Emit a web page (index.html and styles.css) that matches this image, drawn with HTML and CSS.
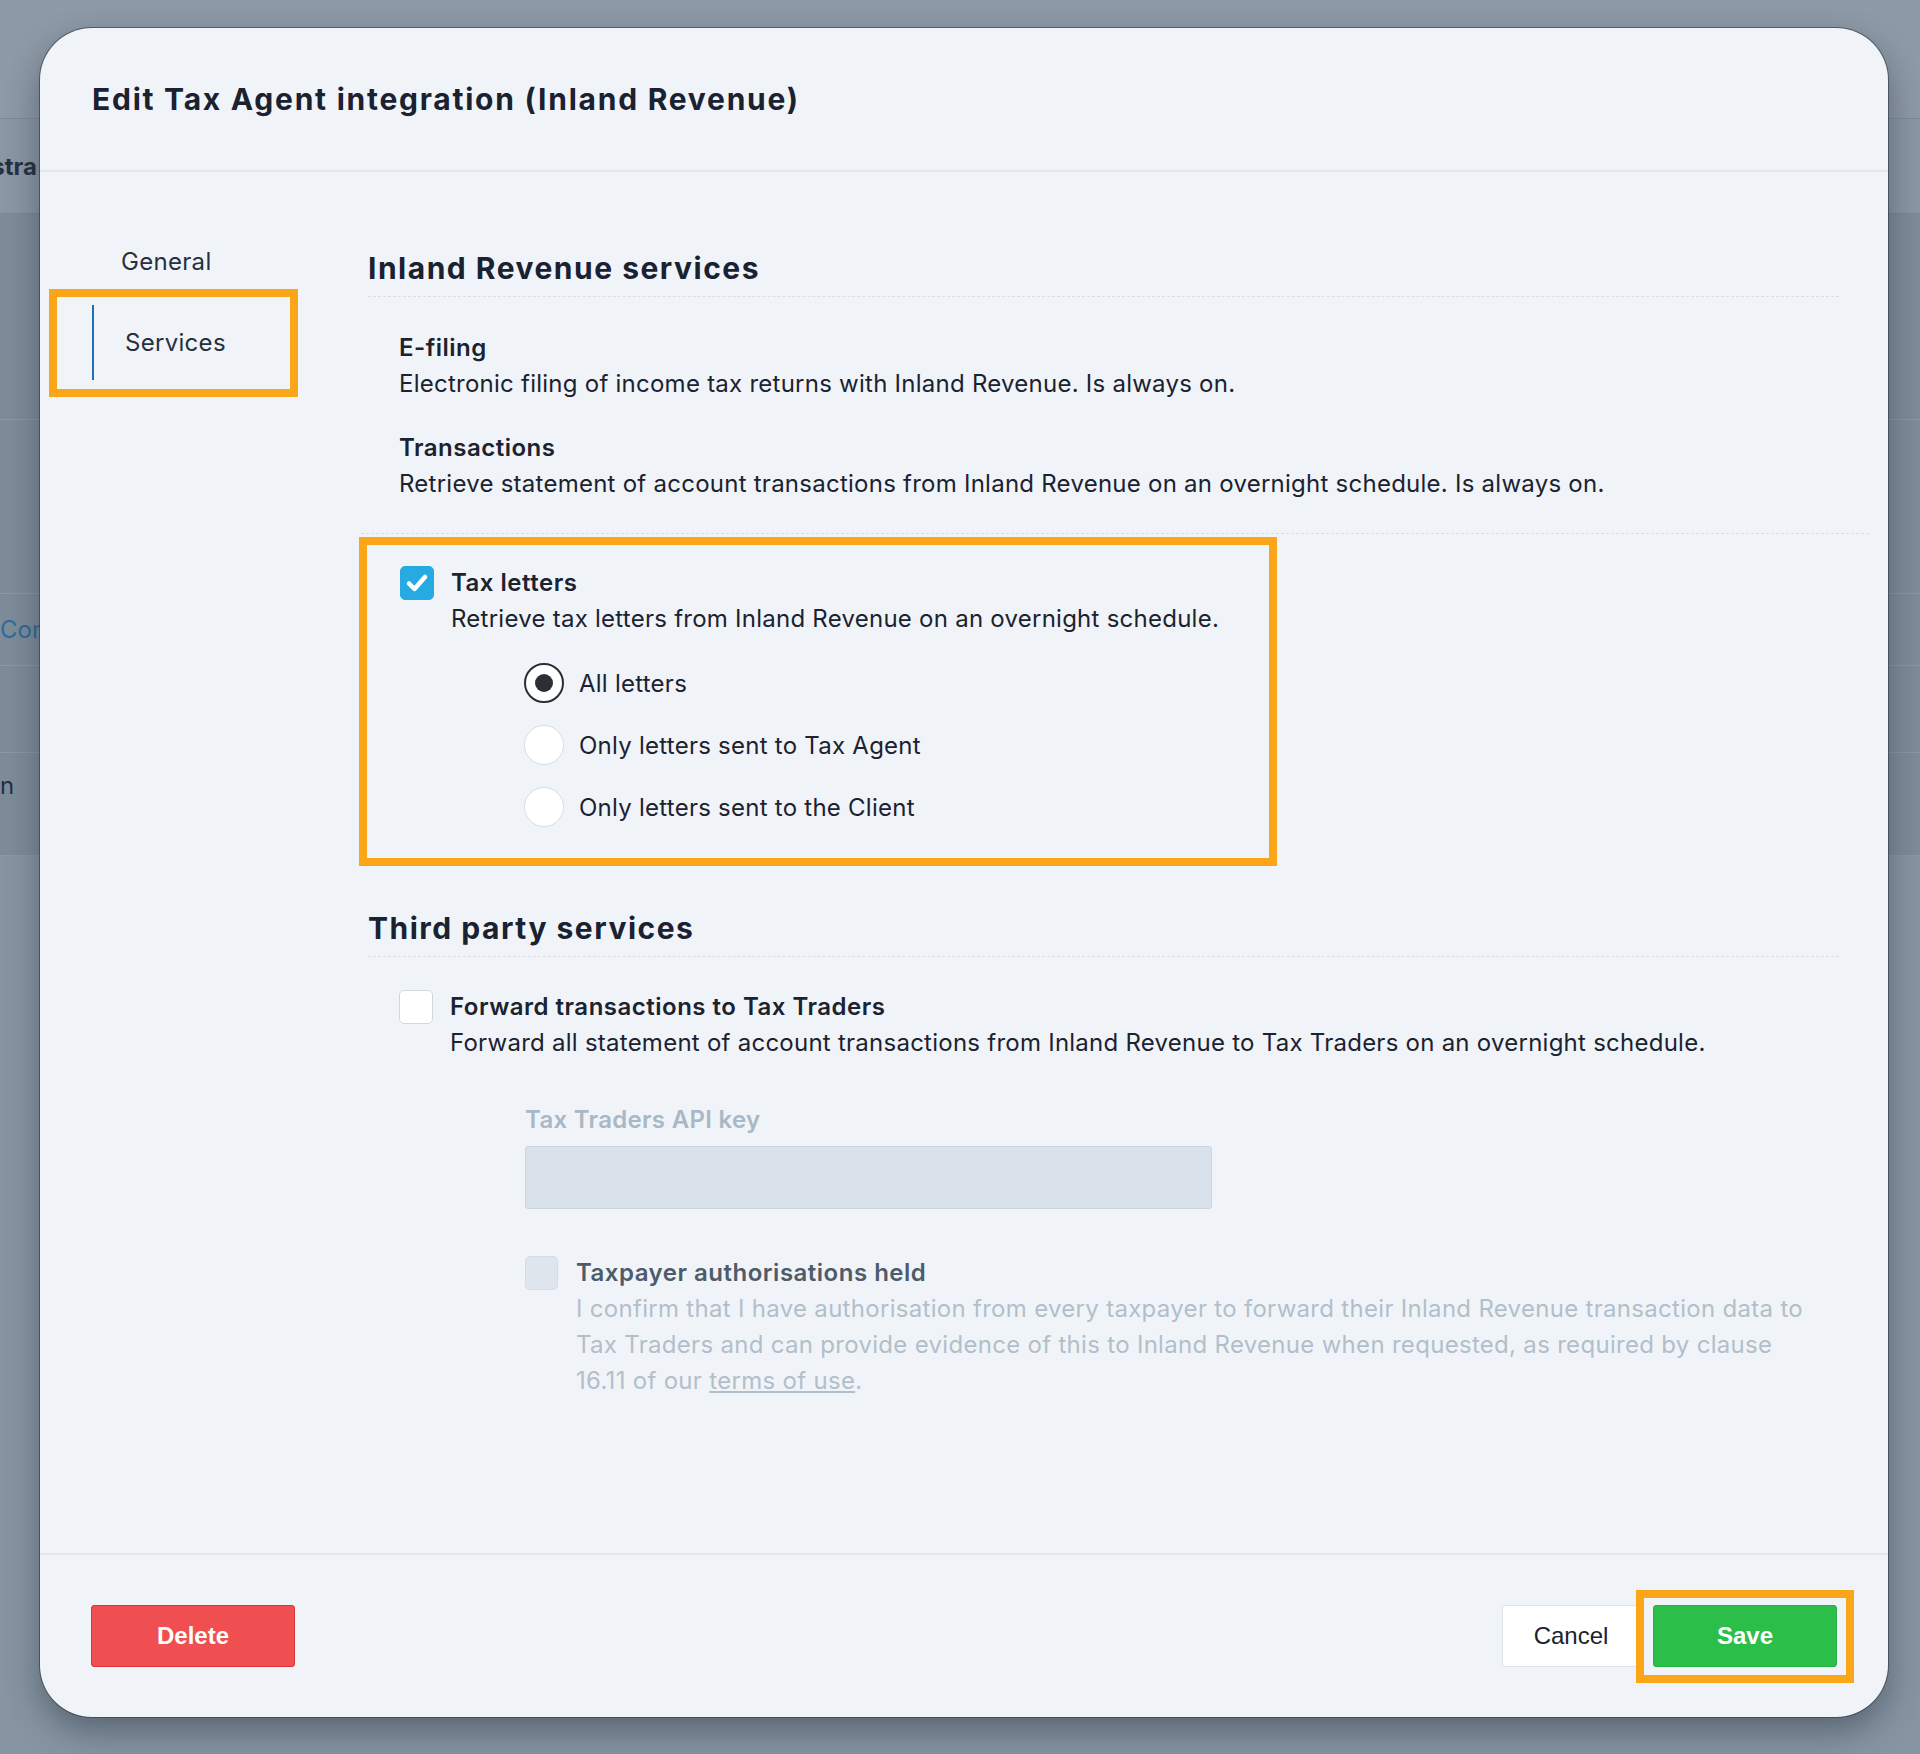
FILE: index.html
```html
<!DOCTYPE html>
<html lang="en">
<head>
  <meta charset="UTF-8">
  <meta name="viewport" content="width=device-width, initial-scale=1.0">
  <title>Edit Tax Agent integration</title>
  <link rel="stylesheet" href="styles.css">
</head>
<body>
  <!-- page behind the dialog -->
  <div class="page">
    <div class="page-top"></div>
    <div class="page-row page-head"><span class="peek peek-bold">Administra</span></div>
    <div class="page-row rows">
      <div class="row r1"></div>
      <div class="row r2"></div>
      <div class="row r3"><span class="peek peek-link">Con</span></div>
      <div class="row r4"></div>
      <div class="row r5"><span class="peek">n</span></div>
    </div>
  </div>

  <div class="modal">
    <header class="modal-head">
      <h1 class="modal-title">Edit Tax Agent integration (Inland Revenue)</h1>
    </header>

    <div class="modal-body">
      <nav class="side-nav">
        <a class="nav-item">General</a>
        <a class="nav-item active">Services<span class="mark mark-nav"></span></a>
      </nav>

      <main class="content">
        <h2 class="section-title">Inland Revenue services</h2>

        <div class="service">
          <div class="service-name">E-filing</div>
          <div class="service-desc">Electronic filing of income tax returns with Inland Revenue. Is always on.</div>
        </div>
        <div class="service">
          <div class="service-name">Transactions</div>
          <div class="service-desc">Retrieve statement of account transactions from Inland Revenue on an overnight schedule. Is always on.</div>
        </div>

        <div class="optional">
          <div class="highlight">
            <div class="check-row">
              <span class="checkbox checked">
                <svg viewBox="0 0 34 34" width="34" height="34"><polyline points="9,17.5 14.5,23 25,11" fill="none" stroke="#fff" stroke-width="4.5" stroke-linecap="round" stroke-linejoin="round"/></svg>
              </span>
              <div>
                <div class="service-name">Tax letters</div>
                <div class="service-desc">Retrieve tax letters from Inland Revenue on an overnight schedule.</div>
              </div>
            </div>
            <div class="radios">
              <label class="radio-row"><span class="radio on"></span>All letters</label>
              <label class="radio-row"><span class="radio"></span>Only letters sent to Tax Agent</label>
              <label class="radio-row"><span class="radio"></span>Only letters sent to the Client</label>
            </div>
          </div>
        </div>

        <h2 class="section-title third">Third party services</h2>

        <div class="check-row forward">
          <span class="checkbox"></span>
          <div>
            <div class="service-name">Forward transactions to Tax Traders</div>
            <div class="service-desc">Forward all statement of account transactions from Inland Revenue to Tax Traders on an overnight schedule.</div>
          </div>
        </div>

        <div class="sub disabled">
          <label class="field-label">Tax Traders API key</label>
          <div class="field-input"></div>

          <div class="check-row auth">
            <span class="checkbox off"></span>
            <div>
              <div class="auth-name">Taxpayer authorisations held</div>
              <div class="auth-desc">I confirm that I have authorisation from every taxpayer to forward their Inland Revenue transaction data to Tax Traders and can provide evidence of this to Inland Revenue when requested, as required by clause 16.11 of our <span class="terms">terms of use</span>.</div>
            </div>
          </div>
        </div>
      </main>
    </div>

    <footer class="modal-foot">
      <button class="btn btn-delete">Delete</button>
      <div class="foot-right">
        <button class="btn btn-cancel">Cancel</button>
        <button class="btn btn-save">Save<span class="mark mark-save"></span></button>
      </div>
    </footer>
  </div>
</body>
</html>
```

FILE: styles.css
```css
:root {
  --ink: #1b2230;
  --orange: #fba619;
  --line: #dfe5ec;
  --muted: #b2bfcb;
}

body {
  margin: 0;
  min-height: 1754px;
  background: #8795a3;
  font-family: Inter, "Noto Sans", sans-serif;
  color: var(--ink);
  overflow: hidden;
}

/* background page */
.page { width: 100%; }
.page-top { height: 118px; background: #8e9aa7; border-bottom: 1px solid #7f8b98; }
.page-row { display: flex; flex-direction: column; }
.page-head { height: 94px; background: #8b97a4; border-bottom: 1px solid #7d8995; justify-content: center; }
.rows { background: #7e8c9a; }
.row { border-bottom: 1px solid #8c98a5; display: flex; align-items: center; }
.r1 { height: 205px; }
.r2 { height: 173px; }
.r3 { height: 71px; }
.r4 { height: 86px; }
.r5 { height: 103px; align-items: flex-start; padding-top: 18px; box-sizing: border-box; }
.peek { font-size: 24px; color: #253040; }
.peek-bold { font-weight: 700; margin-left: -91px; color: #263140; }
.peek-link { color: #2c6c9c; }

/* dialog */
.modal {
  position: absolute;
  left: 40px;
  top: 28px;
  width: 1848px;
  height: 1689px;
  background: #f0f4f8;
  border-radius: 52px;
  box-shadow: 0 0 0 1px rgba(40, 50, 62, .55), 0 14px 34px rgba(30, 40, 52, .45);
  display: flex;
  flex-direction: column;
  overflow: hidden;
}

.modal-head {
  height: 142px;
  border-bottom: 2px solid #e1e7ed;
  display: flex;
  align-items: center;
  padding-left: 52px;
}
.modal-title {
  margin: 0;
  font-size: 30px;
  font-weight: 700;
  letter-spacing: 1.75px;
  color: #1a2232;
}

.modal-body {
  flex: 1;
  display: flex;
  gap: 70px;
  padding: 52px 49px 0 52px;
}

.side-nav { width: 206px; flex: none; display: flex; flex-direction: column; gap: 6px; }
.nav-item {
  position: relative;
  height: 75px;
  display: flex;
  align-items: center;
  padding-left: 29px;
  font-size: 24px;
  letter-spacing: 0.3px;
  color: #263040;
}
.nav-item.active { border-left: 2px solid #1f6fb8; padding-left: 31px; }

/* orange annotation frames */
.mark { position: absolute; border: 8px solid var(--orange); pointer-events: none; }
.mark-nav { left: -45px; top: -16px; width: 249px; height: 108px; box-sizing: border-box; }
.mark-save { left: -18px; top: -16px; right: -18px; bottom: -17px; }

.content { flex: 1; padding-top: 26px; }

.section-title {
  margin: 0;
  font-size: 30px;
  line-height: 36px;
  font-weight: 700;
  letter-spacing: 1.5px;
  color: #1a2232;
  padding-bottom: 10px;
  border-bottom: 1px dashed #d8dfe6;
}
.section-title.third { margin-top: 44px; }

.service { padding-left: 31px; }
.service:first-of-type { margin-top: 33px; }
.service + .service { margin-top: 28px; }
.service-name { font-size: 24px; line-height: 36px; font-weight: 600; letter-spacing: 0.5px; }
.service-desc { font-size: 24px; line-height: 36px; letter-spacing: 0.25px; }

.optional {
  margin: 31px -30px 0 -7px;
  border-top: 1px dashed #d8dfe6;
  padding-top: 3px;
}
.highlight {
  width: 918px;
  box-sizing: border-box;
  border: 8px solid var(--orange);
  margin-left: -2px;
  padding: 20px 0 31px 33px;
}

.check-row { display: flex; gap: 17px; align-items: flex-start; }
.checkbox {
  flex: none;
  width: 34px;
  height: 34px;
  box-sizing: border-box;
  border-radius: 5px;
  margin-top: 1px;
  background: #fff;
  border: 1px solid #cfd7e0;
}
.checkbox.checked { background: #27aae1; border-color: #27aae1; }
.checkbox.checked svg { display: block; margin: -1px; }

.radios { display: flex; flex-direction: column; gap: 22px; margin: 26px 0 0 124px; }
.radio-row { display: flex; align-items: center; gap: 15px; font-size: 24px; letter-spacing: 0.25px; height: 40px; }
.radio {
  flex: none;
  width: 40px;
  height: 40px;
  box-sizing: border-box;
  border-radius: 50%;
  background: #fff;
  border: 1px solid #d8dee6;
  display: flex;
  align-items: center;
  justify-content: center;
}
.radio.on { border: 2px solid #2a2f36; }
.radio.on::after { content: ""; width: 18px; height: 18px; border-radius: 50%; background: #2b2f35; }

.forward { margin-top: 32px; padding-left: 31px; }

.sub { padding-left: 157px; }
.field-label { display: block; margin-top: 41px; font-size: 24px; line-height: 36px; font-weight: 600; letter-spacing: 0.3px; color: #a9b8c7; }
.field-input {
  margin-top: 8px;
  width: 687px;
  height: 63px;
  box-sizing: border-box;
  background: #d9e1ea;
  border: 1px solid #ccd5df;
  border-radius: 3px;
}
.auth { margin-top: 46px; gap: 18px; }
.checkbox.off { width: 33px; background: #dfe5ec; border-color: #d3dbe4; }
.auth-name { font-size: 24px; line-height: 36px; font-weight: 600; letter-spacing: 0.5px; color: #4e5b6a; }
.auth-desc { font-size: 24px; line-height: 36px; letter-spacing: 0.3px; color: var(--muted); max-width: 1245px; }
.terms { text-decoration: underline; }

.modal-foot {
  height: 162px;
  flex: none;
  border-top: 2px solid #e1e7ed;
  display: flex;
  align-items: center;
  justify-content: space-between;
  padding: 0 51px;
}
.foot-right { display: flex; gap: 13px; }

.btn {
  position: relative;
  height: 62px;
  border-radius: 3px;
  font-family: "Liberation Sans", Arial, sans-serif;
  font-size: 24px;
  cursor: pointer;
}
.btn-delete { width: 204px; background: #ef4f50; border: 1px solid #dc3338; color: #fff; font-weight: 700; }
.btn-cancel { width: 138px; background: #fff; border: 1px solid #dde3ea; color: #1a2232; }
.btn-save { width: 184px; background: #2bbf4a; border: 1px solid #27b044; color: #fff; font-weight: 700; }
```
